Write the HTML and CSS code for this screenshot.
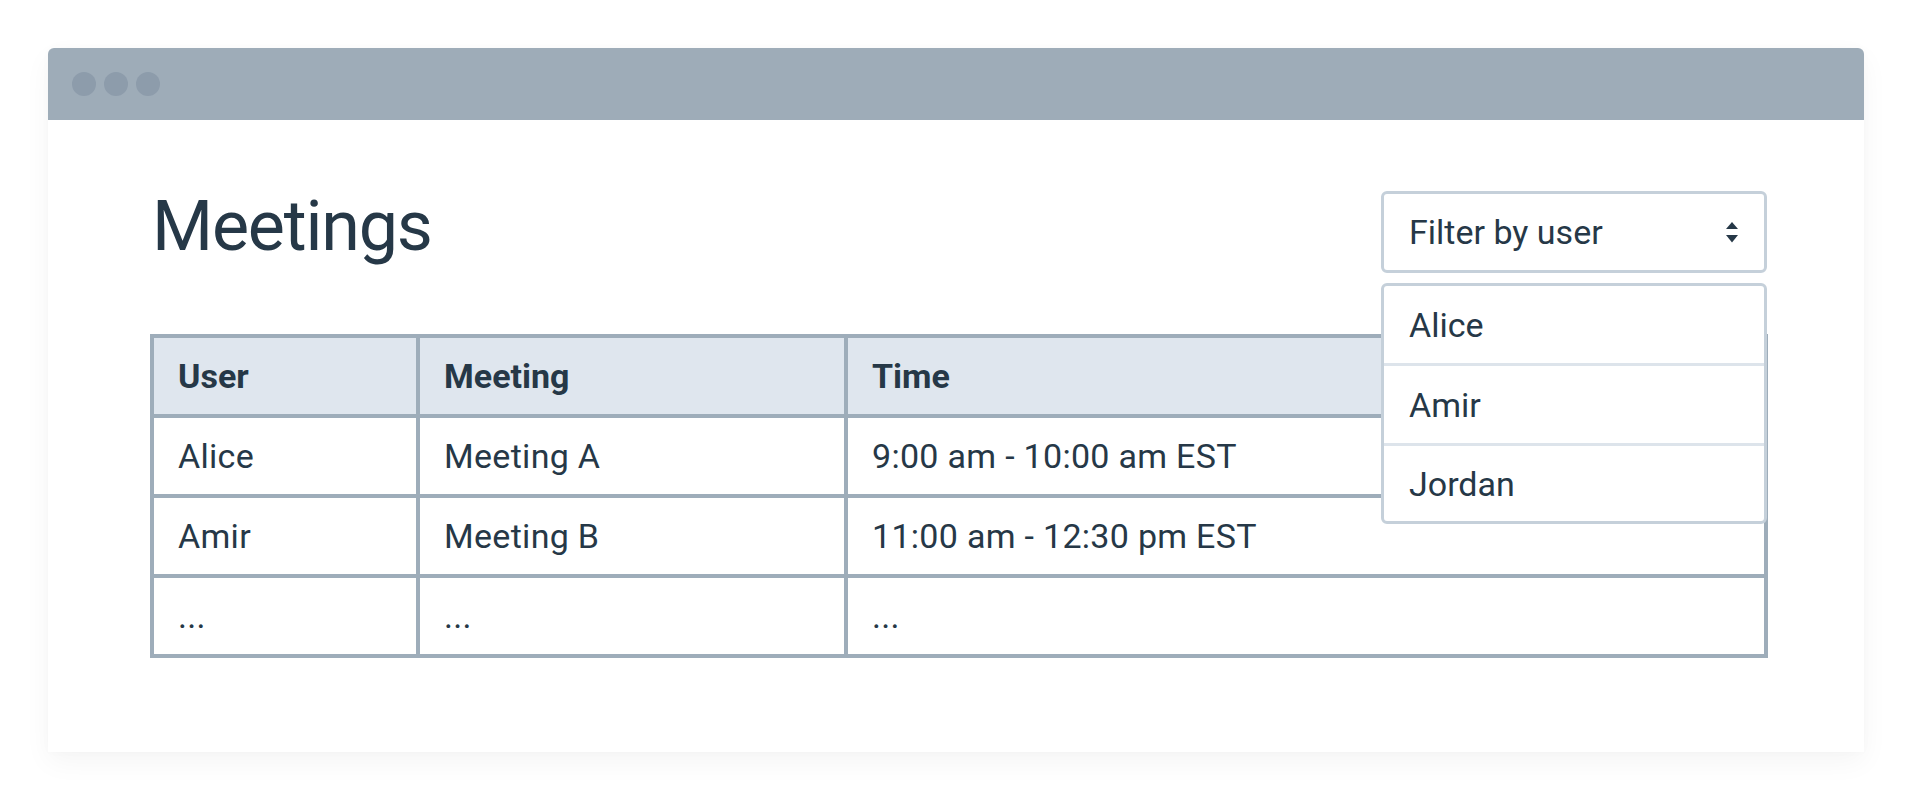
FILE: index.html
```html
<!DOCTYPE html>
<html lang="en">
<head>
<meta charset="utf-8">
<title>Meetings</title>
<link rel="stylesheet" href="styles.css">
</head>
<body>
  <div class="window">
    <div class="titlebar">
      <span class="dot"></span><span class="dot"></span><span class="dot"></span>
    </div>
    <div class="content">
      <div class="header">
        <h1 class="title">Meetings</h1>
        <div class="filter">
          <div class="select">
            <span>Filter by user</span>
            <svg class="arrows" width="12" height="21" viewBox="0 0 12 21"><path d="M6 0 L12 7 H0 Z" fill="#263847"/><path d="M0 13 H12 L6 20.5 Z" fill="#263847"/></svg>
          </div>
          <ul class="menu">
            <li>Alice</li>
            <li>Amir</li>
            <li>Jordan</li>
          </ul>
        </div>
      </div>
      <table class="meetings">
        <thead>
          <tr><th class="c1">User</th><th class="c2">Meeting</th><th>Time</th></tr>
        </thead>
        <tbody>
          <tr><td>Alice</td><td>Meeting A</td><td>9:00 am - 10:00 am EST</td></tr>
          <tr><td>Amir</td><td>Meeting B</td><td>11:00 am - 12:30 pm EST</td></tr>
          <tr><td>...</td><td>...</td><td>...</td></tr>
        </tbody>
      </table>
    </div>
  </div>
</body>
</html>
```
FILE: styles.css
```css
* { box-sizing: border-box; }
html, body { margin: 0; padding: 0; background: #ffffff; }
body {
  font-family: Roboto, "Liberation Sans", sans-serif;
  color: #263847;
  padding: 48px 48px 48px 48px;
}
.window {
  width: 1816px;
  height: 704px;
  background: #ffffff;
  border-radius: 6px 6px 0 0;
  box-shadow: 0 10px 28px rgba(0, 0, 0, 0.045), 0 0 10px rgba(0, 0, 0, 0.02);
}
.titlebar {
  height: 72px;
  background: #9eacb8;
  border-radius: 6px 6px 0 0;
  display: flex;
  align-items: center;
  gap: 8px;
  padding-left: 24px;
}
.dot {
  width: 24px;
  height: 24px;
  border-radius: 50%;
  background: #8d9cab;
}
.content {
  padding: 71px 96px 0 102px;
}
.header {
  display: flex;
  justify-content: space-between;
  align-items: flex-start;
}
.title {
  margin: -6px 0 0 2px;
  font-size: 70px;
  font-weight: 400;
  line-height: 82px;
  letter-spacing: -1.2px;
}
.filter {
  position: relative;
  width: 386px;
  margin-right: 1px;
}
.select {
  height: 82px;
  border: 3px solid #c5d0da;
  border-radius: 6px;
  display: flex;
  align-items: center;
  justify-content: space-between;
  padding: 0 26px 0 25px;
  font-size: 34px;
  background: #ffffff;
}
.arrows { display: block; }
.menu {
  position: absolute;
  top: 92px;
  left: 0;
  right: 0;
  margin: 0;
  padding: 0;
  list-style: none;
  background: #ffffff;
  border: 3px solid #c5d0da;
  border-radius: 6px;
  z-index: 2;
}
.menu li {
  height: 80px;
  display: flex;
  align-items: center;
  padding: 0 25px;
  font-size: 34px;
  border-top: 3px solid #dde4eb;
}
.menu li:first-child { height: 77px; border-top: 0; }
.menu li:last-child { height: 78px; }
.meetings {
  margin-top: 61px;
  width: 100%;
  table-layout: fixed;
  border-collapse: separate;
  border-spacing: 0;
  border-top: 4px solid #9eadba;
  border-left: 4px solid #9eadba;
  font-size: 34px;
}
.meetings tr { height: 80px; }
.meetings th, .meetings td {
  border-right: 4px solid #9eadba;
  border-bottom: 4px solid #9eadba;
  padding: 0 24px;
  text-align: left;
  vertical-align: middle;
  white-space: nowrap;
}
.meetings td { letter-spacing: 0.3px; }
.meetings th {
  background: #dfe6ee;
  font-weight: 700;
}
.meetings th.c1 { width: 266px; }
.meetings th.c2 { width: 428px; }
```
